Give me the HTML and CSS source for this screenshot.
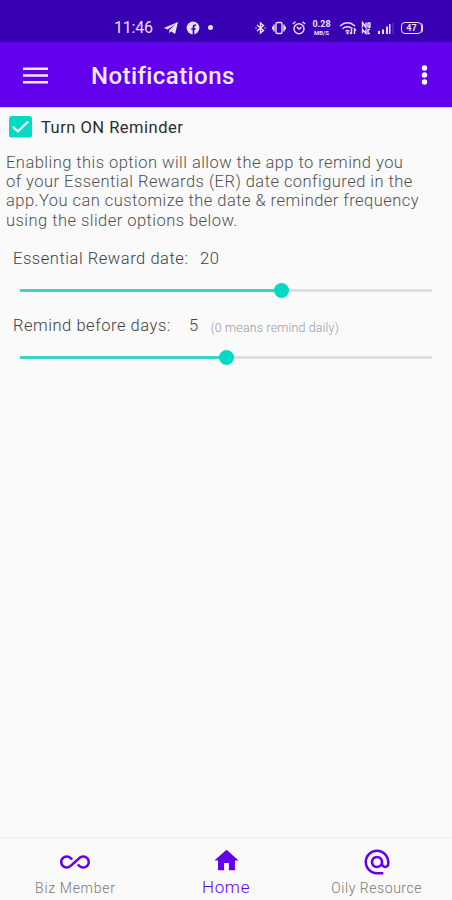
FILE: index.html
```html
<!DOCTYPE html>
<html lang="en">
<head>
<meta charset="utf-8">
<title>Notifications</title>
<link rel="stylesheet" href="styles.css">
</head>
<body>
<div class="status">
  <span class="clock">11:46</span>
  <svg class="telegram" width="16" height="14" viewBox="0 0 16 14"><path fill="currentColor" d="M15 1 .8 7l3.800 1.500L12.500 3 6.200 9.300l-.3 2.900 2-2 4.200 2.700z"/></svg>
  <svg class="facebook" width="14" height="14" viewBox="0 0 14 14"><circle cx="7" cy="7" r="6.400" fill="currentColor"/><path class="cut" d="M7.500 14V6q0-2 2.400-2M5.300 8h4.300"/></svg>
  <i class="dot"></i>
  <svg class="bluetooth" width="11" height="14" viewBox="0 0 11 14"><path class="line" d="m2 4 6.500 5.500L5.500 12V2l3 2.500L2 10M.5 7h1M9.500 7h1"/></svg>
  <svg class="vibrate" width="14" height="14" viewBox="0 0 14 14"><rect class="line" x="4" y="1.500" width="6" height="11" rx="1.500"/><path class="line" d="M2 3.500v7M12 3.500v7M.6 5.500v3M13.400 5.500v3"/></svg>
  <svg class="alarm" width="14" height="14" viewBox="0 0 14 14"><circle class="line" cx="7" cy="7.700" r="5"/><path class="line" d="M.8 3 3.500.8M13.200 3 10.500.8M4.800 5.800 7 8l2.500-1.800"/></svg>
  <span class="speed"><b>0.28</b><b>MB/S</b></span>
  <svg class="wifi" width="18" height="14" viewBox="0 0 18 14"><path class="line" d="M1 5q7.500-6.500 15 0M3.500 7.800q5-4 10 0M6.500 10.300q2-1.600 4 0"/><circle cx="8.500" cy="12" r="1.200" fill="currentColor"/><path class="line" d="M12.500 8v5M11 11.500l1.500 1.500M15.500 13V8l1.500 1.500"/></svg>
  <svg class="nfc" width="10" height="14" viewBox="0 0 10 14"><path class="line" d="M1.500 6.500v-5l3.500 5v-5M7 1.500v5M7 2h2v4H7M1.500 12.500v-4l3.500 4v-4M9 8.500H7v4h2"/></svg>
  <svg class="signal" width="18" height="14" viewBox="0 0 18 14"><path fill="currentColor" d="M1 10h2v3H1zM5 8.500h2V13H5zM9 5.500h2V13H9zM12 3h1.500v10H12z"/><path class="faint" d="M16 2v11"/></svg>
  <span class="battery">47</span>
</div>
<header class="appbar">
  <svg class="menu" width="25" height="17" viewBox="0 0 25 17"><path fill="currentColor" d="M0 .5h25V3H0zM0 7.200h25v2.500H0zM0 13.900h25v2.500H0z"/></svg>
  <h1>Notifications</h1>
  <svg class="more" width="7" height="22" viewBox="0 0 7 22"><g fill="currentColor"><circle cx="3.500" cy="4" r="2.700"/><circle cx="3.500" cy="11" r="2.700"/><circle cx="3.500" cy="18" r="2.700"/></g></svg>
</header>
<main>
  <label class="toggle">
    <svg width="23" height="22" viewBox="0 0 23 22"><rect width="23" height="21.500" rx="2.500" fill="#03dac5"/><path d="m3.800 10.500 5 5L19.200 5.500" fill="none" stroke="#fff" stroke-width="2.300"/></svg>
    <span class="toggle-text">Turn ON Reminder</span>
  </label>
  <p class="intro">Enabling this option will allow the app to remind you<br>of your Essential Rewards (ER) date configured in the<br>app.You can customize the date &amp; reminder frequency<br>using the slider options below.</p>
  <section class="setting">
    <div class="row"><span class="name date">Essential Reward date:</span><span class="value">20</span></div>
    <div class="slider"><div class="fill" style="width:261px"></div><i class="thumb"></i><div class="rest"></div></div>
  </section>
  <section class="setting">
    <div class="row"><span class="name days">Remind before days:</span><span class="value">5</span><span class="hint">(0 means remind daily)</span></div>
    <div class="slider"><div class="fill" style="width:206px"></div><i class="thumb"></i><div class="rest"></div></div>
  </section>
</main>
<nav>
  <a class="tab biz"><svg width="30" height="30" viewBox="0 0 24 24"><path fill="currentColor" d="M18.600 6.620c-1.440 0-2.800.56-3.770 1.530L12 10.660 10.480 12h.01L7.800 14.390c-.64.64-1.490.99-2.400.99-1.870 0-3.390-1.510-3.390-3.380S3.530 8.620 5.400 8.620c.91 0 1.760.35 2.440 1.030l1.130 1 1.510-1.340L9.220 8.200C8.200 7.180 6.840 6.620 5.400 6.620 2.420 6.620 0 9.040 0 12s2.420 5.380 5.400 5.380c1.440 0 2.800-.56 3.770-1.530l2.830-2.500.01.01L13.520 12h-.01l2.690-2.390c.64-.64 1.490-.99 2.400-.99 1.870 0 3.390 1.510 3.390 3.380s-1.520 3.380-3.390 3.380c-.9 0-1.760-.35-2.440-1.030l-1.140-1.010-1.510 1.340 1.270 1.120c1.020 1.010 2.370 1.570 3.820 1.570 2.980 0 5.400-2.410 5.400-5.380s-2.420-5.370-5.400-5.370z"/></svg><span class="tab-text">Biz Member</span></a>
  <a class="tab home"><svg width="29" height="29" viewBox="0 0 24 24"><path fill="currentColor" d="M10 20v-6h4v6h5v-8h3L12 3 2 12h3v8z"/></svg><span class="tab-text">Home</span></a>
  <a class="tab oily"><svg width="30" height="30" viewBox="0 0 24 24"><path fill="currentColor" d="M12 1.950c-5.520 0-10 4.480-10 10s4.480 10 10 10h5v-2h-5c-4.340 0-8-3.660-8-8s3.660-8 8-8 8 3.660 8 8v1.430c0 .79-.71 1.570-1.500 1.570s-1.500-.78-1.500-1.570v-1.430c0-2.760-2.240-5-5-5s-5 2.240-5 5 2.240 5 5 5c1.380 0 2.640-.56 3.540-1.470.65.89 1.770 1.470 2.960 1.470 1.970 0 3.500-1.600 3.500-3.570v-1.430c0-5.520-4.480-10-10-10zm0 13c-1.660 0-3-1.340-3-3s1.340-3 3-3 3 1.340 3 3-1.340 3-3 3z"/></svg><span class="tab-text">Oily Resource</span></a>
</nav>
</body>
</html>
```
FILE: styles.css
```css
* { box-sizing: border-box; }
body {
  margin: 0;
  height: 900px;
  display: flex;
  flex-direction: column;
  overflow: hidden;
  background: #fafafa;
  font-family: Roboto, "Liberation Sans", sans-serif;
}
svg { display: block; flex: none; }
.status {
  height: 42px;
  padding: 13px 0 0 114px;
  display: flex;
  align-items: center;
  background: #3900b3;
  color: #e9e0fa;
}
.status .line { fill: none; stroke: currentColor; stroke-width: 1.4; }
.clock { width: 49px; font-size: 16px; letter-spacing: -.2px; }
.facebook { margin-left: 7px; }
.cut { fill: none; stroke: #3900b3; stroke-width: 1.7; }
.dot { width: 5px; height: 5px; margin-left: 8px; border-radius: 50%; background: currentColor; }
.bluetooth { margin-left: 42px; }
.vibrate { margin-left: 6px; }
.alarm { margin-left: 6px; }
.speed { width: 21px; margin-left: 5px; display: flex; flex-direction: column; align-items: center; }
.speed b { font-size: 9px; line-height: 9px; }
.speed b + b { font-size: 6px; line-height: 7px; }
.wifi { margin-left: 7px; }
.nfc { margin-left: 4px; }
.signal { margin-left: 6px; }
.faint { stroke: #6540c3; stroke-width: 1; }
.battery {
  width: 21px;
  height: 12px;
  margin-left: 6px;
  border: 1.5px solid currentColor;
  border-radius: 4px;
  font-size: 9px;
  font-weight: 700;
  line-height: 10px;
  text-align: center;
  box-shadow: 2px 0 0 -1px currentColor;
}
.appbar {
  height: 65px;
  padding: 1px 24px 0 23px;
  display: flex;
  align-items: center;
  background: #6200ee;
  color: #f3eafe;
  box-shadow: 0 1px 1px #d9c8f2;
}
h1 { margin: 0 auto 0 43px; padding-top: 2px; font-size: 24px; font-weight: 500; line-height: 30px; letter-spacing: .42px; }
.more { color: #fff; }
main { flex: 1; }
.toggle { height: 39px; padding: 1px 0 0 9px; display: flex; align-items: center; }
.toggle-text { margin-left: 9px; font-size: 16.5px; letter-spacing: .5px; color: #2c2c2c; }
.intro { margin: 7px 0 0 6px; font-size: 16.5px; font-weight: 300; line-height: 19.2px; letter-spacing: .46px; color: #505050; white-space: nowrap; }
.setting { height: 67px; }
.intro + .setting { margin-top: 17px; }
.row { height: 24px; padding-left: 13px; display: flex; align-items: center; font-size: 16.5px; font-weight: 300; letter-spacing: .54px; color: #404040; white-space: nowrap; }
.name { width: 187px; }
.days { width: 176px; }
.hint { margin-left: 12px; padding-top: 3px; font-size: 12.5px; letter-spacing: .14px; color: #999; }
.slider { height: 15px; margin: 12.5px 20px 0; display: flex; align-items: center; }
.fill { height: 3px; margin-right: -7.5px; background: #3ed3c4; }
.thumb { width: 15px; height: 15px; border-radius: 50%; background: #03dac5; z-index: 1; }
.rest { flex: 1; height: 3px; margin-left: -7px; background: #dedede; }
nav { height: 63px; display: flex; border-top: 1px solid #efefef; }
.tab { flex: 1; display: flex; flex-direction: column; align-items: center; color: #6200ee; padding-top: 9px; }
.tab-text { margin-top: 3px; font-size: 14px; font-weight: 300; line-height: 17px; letter-spacing: .55px; color: #777; }
.biz .tab-text { letter-spacing: .7px; }
.home { padding-top: 8px; }
.home .tab-text { margin-top: 4px; font-size: 17px; letter-spacing: .7px; color: #6200ee; }
```
